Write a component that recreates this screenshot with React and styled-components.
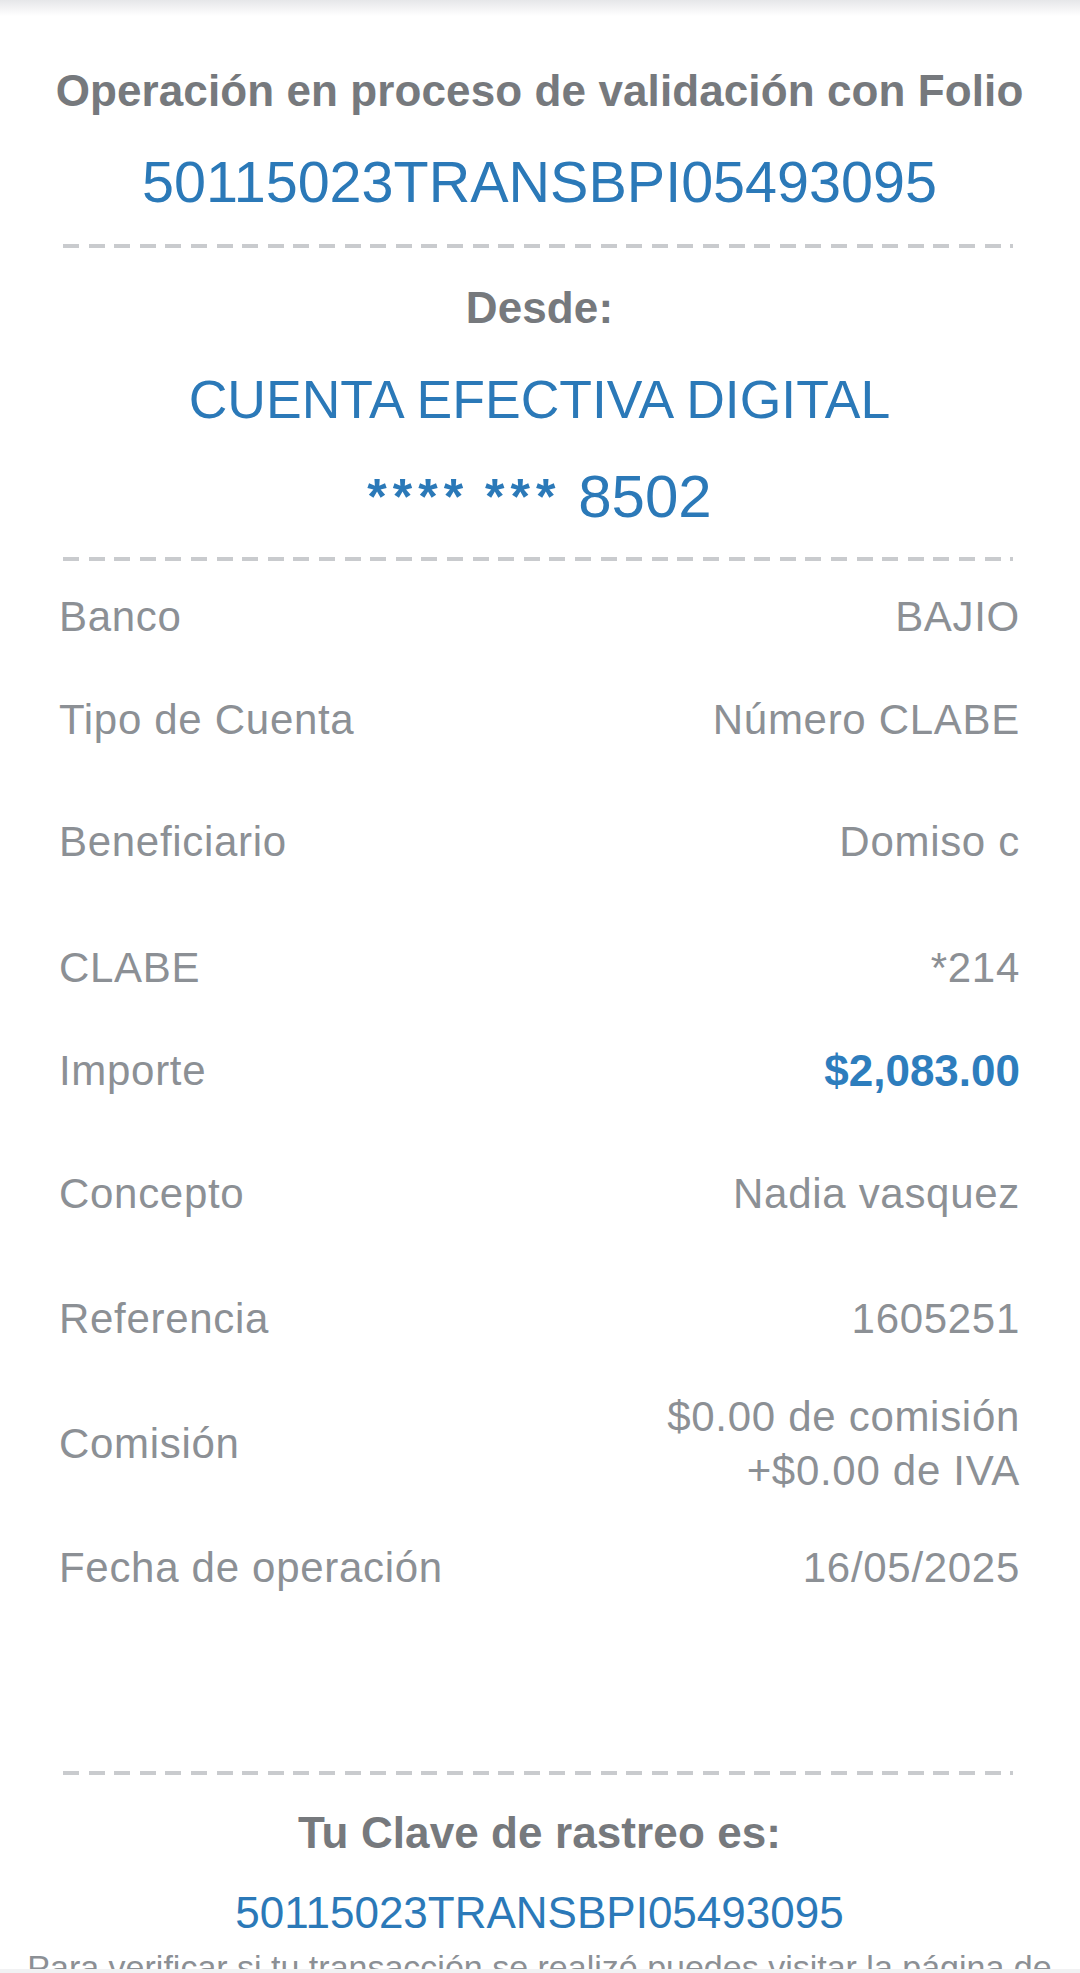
import React from "react";
import styled, { createGlobalStyle } from "styled-components";

const Global = createGlobalStyle`
  html, body { margin: 0; padding: 0; background: #ffffff; }
  body { font-family: "Liberation Sans", Arial, sans-serif; -webkit-font-smoothing: antialiased; }
`;

const Page = styled.div`
  position: relative;
  width: 1080px;
  height: 1973px;
  overflow: hidden;
  background: #ffffff;
`;

const TopShade = styled.div`
  height: 16px;
  background: linear-gradient(#e6e7e9, #ffffff);
`;

const BottomBar = styled.div`
  position: absolute;
  left: 0;
  right: 0;
  bottom: 0;
  height: 4px;
  background: #f1f2f3;
`;

const Section = styled.section`
  display: flex;
  flex-direction: column;
  align-items: center;
  padding: 0 60px 0 59px;
`;

const Heading = styled.div`
  margin-top: ${(p) => p.$mt}px;
  font-size: 44px;
  line-height: 60px;
  font-weight: 700;
  letter-spacing: 0.1px;
  color: #76797d;
  text-align: center;
  white-space: nowrap;
`;

const BlueText = styled.div`
  margin-top: ${(p) => p.$mt}px;
  font-size: ${(p) => p.$size}px;
  line-height: ${(p) => p.$lh}px;
  color: #2b79b8;
  text-align: center;
  white-space: nowrap;
`;

const Stars = styled.span`
  font-size: 50px;
  font-weight: 700;
  letter-spacing: 6px;
  word-spacing: -4px;
  vertical-align: 3px;
`;

const Dashed = styled.div`
  align-self: stretch;
  margin: ${(p) => p.$mt}px 7px 0 4px;
  height: 4px;
  background: repeating-linear-gradient(
    to right,
    #c9cbce 0px,
    #c9cbce 16px,
    transparent 16px,
    transparent 25.6px
  );
`;

const Rows = styled.div`
  align-self: stretch;
  display: flex;
  flex-direction: column;
`;

const Row = styled.div`
  display: flex;
  justify-content: space-between;
  align-items: center;
  margin-top: ${(p) => p.$mt}px;
  font-size: 42px;
  line-height: 50px;
`;

const Label = styled.div`
  color: #8c9095;
  letter-spacing: 0.7px;
  white-space: nowrap;
`;

const Value = styled.div`
  color: ${(p) => (p.$accent ? "#2d7dbd" : "#8c9095")};
  font-weight: ${(p) => (p.$accent ? 700 : 400)};
  font-size: ${(p) => (p.$accent ? 44 : 42)}px;
  letter-spacing: ${(p) => (p.$accent ? 0 : 0.7)}px;
  text-align: right;
  white-space: nowrap;
  line-height: ${(p) => (p.$multi ? 54 : 50)}px;
`;

const Note = styled.div`
  margin-top: 6px;
  font-size: 34px;
  line-height: 40px;
  color: #8c9095;
  text-align: center;
  white-space: nowrap;
`;

const rows = [
  { label: "Banco", value: "BAJIO", mt: 31 },
  { label: "Tipo de Cuenta", value: "Número CLABE", mt: 53 },
  { label: "Beneficiario", value: "Domiso c", mt: 72 },
  { label: "CLABE", value: "*214", mt: 76 },
  { label: "Importe", value: "$2,083.00", mt: 53, accent: true },
  { label: "Concepto", value: "Nadia vasquez", mt: 73 },
  { label: "Referencia", value: "1605251", mt: 75 },
  {
    label: "Comisión",
    value: ["$0.00 de comisión", "+$0.00 de IVA"],
    mt: 46,
    multi: true,
  },
  { label: "Fecha de operación", value: "16/05/2025", mt: 45 },
];

export default function App() {
  return (
    <>
      <Global />
      <Page>
        <TopShade />
        <Section>
          <Heading $mt={45}>Operación en proceso de validación con Folio</Heading>
          <BlueText $mt={26} $size={57.5} $lh={70}>
            50115023TRANSBPI05493095
          </BlueText>
          <Dashed $mt={27} />
          <Heading $mt={30}>Desde:</Heading>
          <BlueText $mt={27} $size={53.5} $lh={70}>
            CUENTA EFECTIVA DIGITAL
          </BlueText>
          <BlueText $mt={27} $size={60} $lh={70}>
            <Stars>**** ***</Stars> 8502
          </BlueText>
          <Dashed $mt={25} />
          <Rows>
            {rows.map((r) => (
              <Row key={r.label} $mt={r.mt}>
                <Label>{r.label}</Label>
                <Value $accent={r.accent} $multi={r.multi}>
                  {Array.isArray(r.value)
                    ? r.value.map((v) => <div key={v}>{v}</div>)
                    : r.value}
                </Value>
              </Row>
            ))}
          </Rows>
          <Dashed $mt={178} />
          <Heading $mt={28}>Tu Clave de rastreo es:</Heading>
          <BlueText $mt={22} $size={44} $lh={56}>
            50115023TRANSBPI05493095
          </BlueText>
          <Note>
            Para verificar si tu transacción se realizó puedes visitar la página de
          </Note>
        </Section>
        <BottomBar />
      </Page>
    </>
  );
}
